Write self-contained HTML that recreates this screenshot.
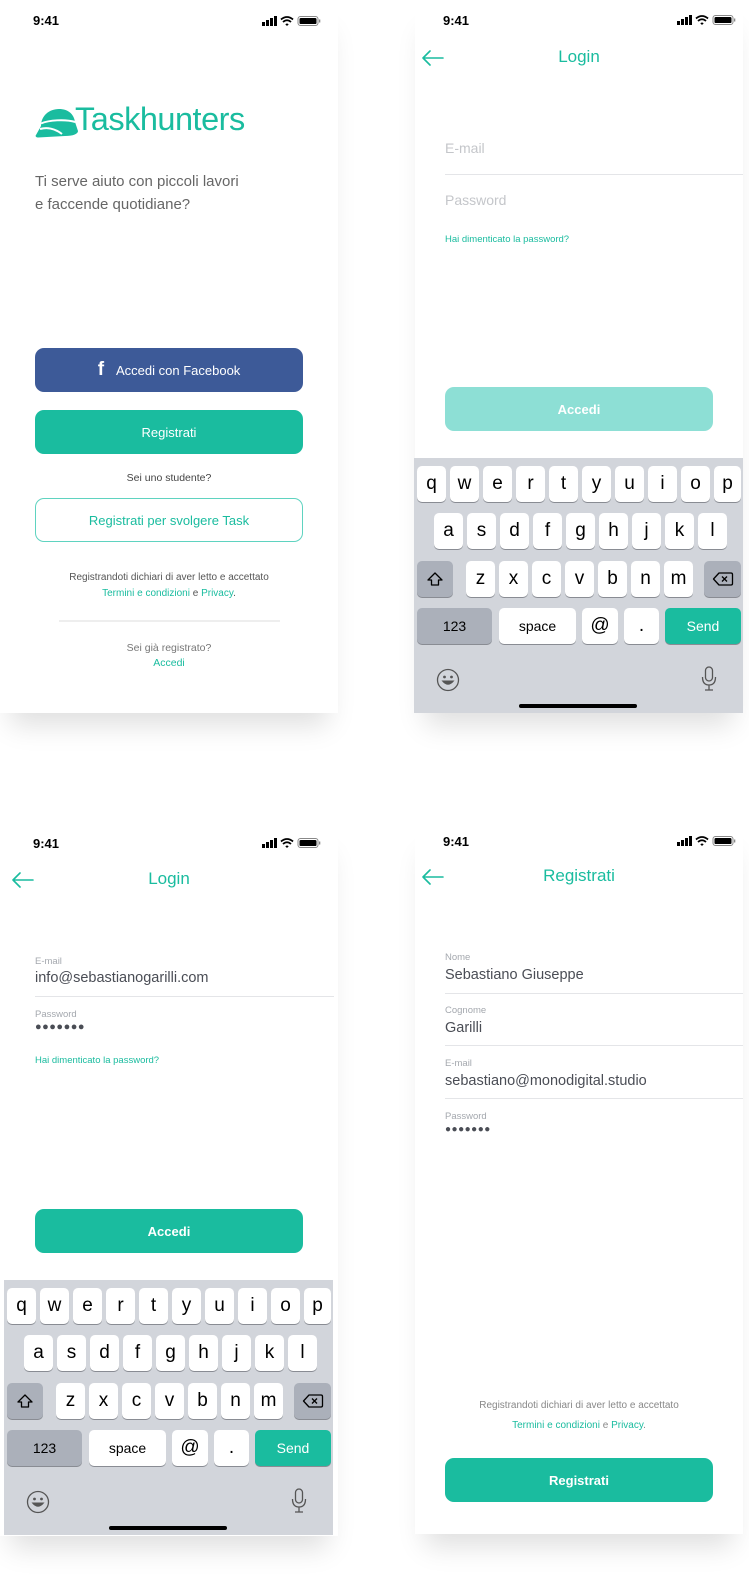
<!DOCTYPE html>
<html><head><meta charset="utf-8">
<style>
*{margin:0;padding:0;box-sizing:border-box}
body{width:749px;height:1591px;background:#fff;position:relative;overflow:hidden;font-family:"Liberation Sans",Arial,sans-serif}
.scr{position:absolute;background:#fff;box-shadow:0 22px 26px -10px rgba(0,0,0,.13)}
.a{position:absolute}
.t{position:absolute;white-space:nowrap}
.time{font-weight:bold;font-size:13px;color:#000}
.btn{position:absolute;border-radius:9px;color:#fff;font-size:13px;display:flex;align-items:center;justify-content:center}
.teal{color:#1abc9f}
.kb{position:absolute;width:329px;height:255px;background:#d2d5db}
.k{position:absolute;background:#fff;border-radius:5px;box-shadow:0 1px 0 #898c93;display:flex;align-items:center;justify-content:center;font-size:19px;color:#000;height:36px}
.g{background:#abb0ba}
.lbl{font-size:9.5px;color:#a4a8ae}
.val{font-size:14.5px;color:#4a4d55}
.ln{position:absolute;height:1px;background:#e4e5e8}
.title{font-size:17px;color:#1abc9f}
</style></head><body>

<svg width="0" height="0" style="position:absolute">
<defs>
<g id="st">
<rect x="0" y="6" width="3" height="4" fill="#000"/><rect x="4" y="4" width="3" height="6" fill="#000"/><rect x="8" y="2" width="3" height="8" fill="#000"/><rect x="12" y="0" width="3" height="10" fill="#000"/>
<path d="M19 3.5 Q25 -1.5 31 3.5" stroke="#000" stroke-width="1.8" fill="none"/>
<path d="M21 6 Q25 2.5 29 6" stroke="#000" stroke-width="1.8" fill="none"/>
<path d="M23.3 8.3 L25 10 L26.7 8.3 Q25 6.8 23.3 8.3Z" fill="#000"/>
<rect x="36" y="0.5" width="20" height="9" rx="2.5" fill="none" stroke="#888" stroke-width="1"/>
<rect x="37.5" y="2" width="17" height="6" rx="1.3" fill="#000"/>
<rect x="57" y="3.5" width="1.3" height="3" fill="#888"/>
</g>
<g id="arr"><path d="M2 8 H22 M9 1 L2 8 L9 15" stroke="#1abc9f" stroke-width="1.6" fill="none" stroke-linecap="round" stroke-linejoin="round"/></g>
</defs></svg>

<!-- SCREEN 1 -->
<div class="scr" style="left:0;top:0;width:338px;height:713px">
  <div class="t time" style="left:33px;top:13px">9:41</div>
  <svg class="a" style="left:262px;top:16px" width="60" height="11"><use href="#st"/></svg>
  <svg class="a" style="left:35px;top:108px" width="44" height="30" viewBox="0 0 44 30">
    <path d="M6 18 C6 8 14 1 24 1 C33 1 39 6 40 14 L43 23 C43 26 38 28 30 28 L3 29.5 C1 29.5 0 28 1 27 Z" fill="#1abc9f"/>
    <path d="M6 15.5 C14 12 30 11 40.5 14" stroke="#fff" stroke-width="2" fill="none"/>
    <path d="M5 21 C12 19 20 20.5 27 26" stroke="#fff" stroke-width="2" fill="none"/>
  </svg>
  <div class="t teal" style="left:75px;top:101px;font-size:32.5px;letter-spacing:-0.5px">Taskhunters</div>
  <div class="t" style="left:35px;top:170px;font-size:15px;color:#666;line-height:23px">Ti serve aiuto con piccoli lavori<br>e faccende quotidiane?</div>
  <div class="btn" style="left:35px;top:348px;width:268px;height:44px;background:#3d5a98">
    <span style="font-weight:bold;font-size:19px;margin-right:12px">f</span>Accedi con Facebook</div>
  <div class="btn" style="left:35px;top:410px;width:268px;height:44px;background:#1abc9f">Registrati</div>
  <div class="t" style="left:0;width:338px;text-align:center;top:472px;font-size:10.5px;color:#444">Sei uno studente?</div>
  <div class="btn teal" style="left:35px;top:498px;width:268px;height:44px;border:1px solid #5fd3c0;color:#1abc9f">Registrati per svolgere Task</div>
  <div class="t" style="left:0;width:338px;text-align:center;top:570px;font-size:10px;color:#555;line-height:16px">Registrandoti dichiari di aver letto e accettato<br><span class="teal">Termini e condizioni</span> e <span class="teal">Privacy</span>.</div>
  <div class="ln" style="left:59px;top:620px;width:221px;height:2px;background:#eee"></div>
  <div class="t" style="left:0;width:338px;text-align:center;top:641px;font-size:10.5px;color:#777;line-height:15px">Sei già registrato?<br><span class="teal">Accedi</span></div>
</div>

<!-- SCREEN 2 -->
<div class="scr" style="left:415px;top:0;width:328px;height:713px">
  <div class="t time" style="left:28px;top:13px">9:41</div>
  <svg class="a" style="left:262px;top:15px" width="60" height="11"><use href="#st"/></svg>
  <svg class="a" style="left:6px;top:50px" width="26" height="17"><use href="#arr"/></svg>
  <div class="t title" style="left:0;width:328px;text-align:center;top:47px">Login</div>
  <div class="t" style="left:30px;top:140px;font-size:14px;color:#c4c6ca">E-mail</div>
  <div class="ln" style="left:30px;top:174px;width:298px"></div>
  <div class="t" style="left:30px;top:192px;font-size:14px;color:#c4c6ca">Password</div>
  <div class="t teal" style="left:30px;top:234px;font-size:9.5px">Hai dimenticato la password?</div>
  <div class="btn" style="left:30px;top:387px;width:268px;height:44px;background:#8ddfd5;font-weight:bold">Accedi</div>
  <div class="kb" style="left:-1px;top:458px">
    <div class="k" style="left:3px;top:8px;width:29px">q</div><div class="k" style="left:36px;top:8px;width:29px">w</div><div class="k" style="left:69px;top:8px;width:29px">e</div><div class="k" style="left:102px;top:8px;width:29px">r</div><div class="k" style="left:135px;top:8px;width:29px">t</div><div class="k" style="left:168px;top:8px;width:29px">y</div><div class="k" style="left:201px;top:8px;width:29px">u</div><div class="k" style="left:234px;top:8px;width:29px">i</div><div class="k" style="left:267px;top:8px;width:29px">o</div><div class="k" style="left:300px;top:8px;width:27px">p</div>
    <div class="k" style="left:20px;top:55px;width:29px">a</div><div class="k" style="left:53px;top:55px;width:29px">s</div><div class="k" style="left:86px;top:55px;width:29px">d</div><div class="k" style="left:119px;top:55px;width:29px">f</div><div class="k" style="left:152px;top:55px;width:29px">g</div><div class="k" style="left:185px;top:55px;width:29px">h</div><div class="k" style="left:218px;top:55px;width:29px">j</div><div class="k" style="left:251px;top:55px;width:29px">k</div><div class="k" style="left:284px;top:55px;width:29px">l</div>
    <div class="k g" style="left:3px;top:103px;width:36px"><svg width="18" height="16"><path d="M9 2 L2 9 H5.5 V14 H12.5 V9 H16 Z" fill="none" stroke="#000" stroke-width="1.3" stroke-linejoin="round"/></svg></div>
    <div class="k" style="left:52px;top:103px;width:29px">z</div><div class="k" style="left:85px;top:103px;width:29px">x</div><div class="k" style="left:118px;top:103px;width:29px">c</div><div class="k" style="left:151px;top:103px;width:29px">v</div><div class="k" style="left:184px;top:103px;width:29px">b</div><div class="k" style="left:217px;top:103px;width:29px">n</div><div class="k" style="left:250px;top:103px;width:29px">m</div>
    <div class="k g" style="left:290px;top:103px;width:37px"><svg width="22" height="16"><path d="M7 2 H19 Q20.5 2 20.5 3.5 V12.5 Q20.5 14 19 14 H7 L1.5 8 Z" fill="none" stroke="#000" stroke-width="1.3" stroke-linejoin="round"/><path d="M10 5.5 L15 10.5 M15 5.5 L10 10.5" stroke="#000" stroke-width="1.3"/></svg></div>
    <div class="k g" style="left:3px;top:150px;width:75px;font-size:14px">123</div>
    <div class="k" style="left:85px;top:150px;width:77px;font-size:14px">space</div>
    <div class="k" style="left:168px;top:150px;width:36px">@</div>
    <div class="k" style="left:210px;top:150px;width:35px">.</div>
    <div class="k" style="left:251px;top:150px;width:76px;font-size:14px;background:#1abc9f;color:#fff">Send</div>
    <svg class="a" style="left:22px;top:210px" width="24" height="24"><circle cx="12" cy="12" r="10.5" fill="none" stroke="#555" stroke-width="1.3"/><circle cx="8.5" cy="9" r="1.4" fill="#555"/><circle cx="15.5" cy="9" r="1.4" fill="#555"/><path d="M5.5 12.5 Q12 21 18.5 12.5 Z" fill="#555"/></svg>
    <svg class="a" style="left:286px;top:208px" width="18" height="26"><rect x="5.5" y="1" width="7" height="14" rx="3.5" fill="none" stroke="#555" stroke-width="1.3"/><path d="M2.5 11 Q2.5 19 9 19 Q15.5 19 15.5 11 M9 19 V24 M5 24 H13" fill="none" stroke="#555" stroke-width="1.3"/></svg>
    <div class="a" style="left:105px;top:246px;width:118px;height:4px;border-radius:2px;background:#000"></div>
  </div>
</div>

<!-- SCREEN 3 -->
<div class="scr" style="left:0;top:823px;width:338px;height:713px">
  <div class="t time" style="left:33px;top:13px">9:41</div>
  <svg class="a" style="left:262px;top:15px" width="60" height="11"><use href="#st"/></svg>
  <svg class="a" style="left:11px;top:49px" width="26" height="17"><use href="#arr"/></svg>
  <div class="t title" style="left:0;width:338px;text-align:center;top:46px">Login</div>
  <div class="t lbl" style="left:35px;top:133px">E-mail</div>
  <div class="t val" style="left:35px;top:147px">info@sebastianogarilli.com</div>
  <div class="ln" style="left:35px;top:173px;width:299px"></div>
  <div class="t lbl" style="left:35px;top:186px">Password</div>
  <div class="t" style="left:35px;top:198px;font-size:11px;color:#4a4d55;letter-spacing:0.5px">●●●●●●●</div>
  <div class="t teal" style="left:35px;top:232px;font-size:9.5px">Hai dimenticato la password?</div>
  <div class="btn" style="left:35px;top:386px;width:268px;height:44px;background:#1abc9f;font-weight:bold">Accedi</div>
  <div class="kb" style="left:4px;top:457px">
    <div class="k" style="left:3px;top:8px;width:29px">q</div><div class="k" style="left:36px;top:8px;width:29px">w</div><div class="k" style="left:69px;top:8px;width:29px">e</div><div class="k" style="left:102px;top:8px;width:29px">r</div><div class="k" style="left:135px;top:8px;width:29px">t</div><div class="k" style="left:168px;top:8px;width:29px">y</div><div class="k" style="left:201px;top:8px;width:29px">u</div><div class="k" style="left:234px;top:8px;width:29px">i</div><div class="k" style="left:267px;top:8px;width:29px">o</div><div class="k" style="left:300px;top:8px;width:27px">p</div>
    <div class="k" style="left:20px;top:55px;width:29px">a</div><div class="k" style="left:53px;top:55px;width:29px">s</div><div class="k" style="left:86px;top:55px;width:29px">d</div><div class="k" style="left:119px;top:55px;width:29px">f</div><div class="k" style="left:152px;top:55px;width:29px">g</div><div class="k" style="left:185px;top:55px;width:29px">h</div><div class="k" style="left:218px;top:55px;width:29px">j</div><div class="k" style="left:251px;top:55px;width:29px">k</div><div class="k" style="left:284px;top:55px;width:29px">l</div>
    <div class="k g" style="left:3px;top:103px;width:36px"><svg width="18" height="16"><path d="M9 2 L2 9 H5.5 V14 H12.5 V9 H16 Z" fill="none" stroke="#000" stroke-width="1.3" stroke-linejoin="round"/></svg></div>
    <div class="k" style="left:52px;top:103px;width:29px">z</div><div class="k" style="left:85px;top:103px;width:29px">x</div><div class="k" style="left:118px;top:103px;width:29px">c</div><div class="k" style="left:151px;top:103px;width:29px">v</div><div class="k" style="left:184px;top:103px;width:29px">b</div><div class="k" style="left:217px;top:103px;width:29px">n</div><div class="k" style="left:250px;top:103px;width:29px">m</div>
    <div class="k g" style="left:290px;top:103px;width:37px"><svg width="22" height="16"><path d="M7 2 H19 Q20.5 2 20.5 3.5 V12.5 Q20.5 14 19 14 H7 L1.5 8 Z" fill="none" stroke="#000" stroke-width="1.3" stroke-linejoin="round"/><path d="M10 5.5 L15 10.5 M15 5.5 L10 10.5" stroke="#000" stroke-width="1.3"/></svg></div>
    <div class="k g" style="left:3px;top:150px;width:75px;font-size:14px">123</div>
    <div class="k" style="left:85px;top:150px;width:77px;font-size:14px">space</div>
    <div class="k" style="left:168px;top:150px;width:36px">@</div>
    <div class="k" style="left:210px;top:150px;width:35px">.</div>
    <div class="k" style="left:251px;top:150px;width:76px;font-size:14px;background:#1abc9f;color:#fff">Send</div>
    <svg class="a" style="left:22px;top:210px" width="24" height="24"><circle cx="12" cy="12" r="10.5" fill="none" stroke="#555" stroke-width="1.3"/><circle cx="8.5" cy="9" r="1.4" fill="#555"/><circle cx="15.5" cy="9" r="1.4" fill="#555"/><path d="M5.5 12.5 Q12 21 18.5 12.5 Z" fill="#555"/></svg>
    <svg class="a" style="left:286px;top:208px" width="18" height="26"><rect x="5.5" y="1" width="7" height="14" rx="3.5" fill="none" stroke="#555" stroke-width="1.3"/><path d="M2.5 11 Q2.5 19 9 19 Q15.5 19 15.5 11 M9 19 V24 M5 24 H13" fill="none" stroke="#555" stroke-width="1.3"/></svg>
    <div class="a" style="left:105px;top:246px;width:118px;height:4px;border-radius:2px;background:#000"></div>
  </div>
</div>

<!-- SCREEN 4 -->
<div class="scr" style="left:415px;top:823px;width:328px;height:711px">
  <div class="t time" style="left:28px;top:11px">9:41</div>
  <svg class="a" style="left:262px;top:13px" width="60" height="11"><use href="#st"/></svg>
  <svg class="a" style="left:6px;top:46px" width="26" height="17"><use href="#arr"/></svg>
  <div class="t title" style="left:0;width:328px;text-align:center;top:43px">Registrati</div>
  <div class="t lbl" style="left:30px;top:129px">Nome</div>
  <div class="t val" style="left:30px;top:144px">Sebastiano Giuseppe</div>
  <div class="ln" style="left:30px;top:170px;width:298px"></div>
  <div class="t lbl" style="left:30px;top:182px">Cognome</div>
  <div class="t val" style="left:30px;top:197px">Garilli</div>
  <div class="ln" style="left:30px;top:222px;width:298px"></div>
  <div class="t lbl" style="left:30px;top:235px">E-mail</div>
  <div class="t val" style="left:30px;top:250px">sebastiano@monodigital.studio</div>
  <div class="ln" style="left:30px;top:275px;width:298px"></div>
  <div class="t lbl" style="left:30px;top:288px">Password</div>
  <div class="t" style="left:30px;top:301px;font-size:10px;color:#4a4d55;letter-spacing:0.5px">●●●●●●●</div>
  <div class="t" style="left:0;width:328px;text-align:center;top:573px;font-size:10px;color:#888;line-height:20px">Registrandoti dichiari di aver letto e accettato<br><span class="teal">Termini e condizioni</span> e <span class="teal">Privacy</span>.</div>
  <div class="btn" style="left:30px;top:635px;width:268px;height:44px;background:#1abc9f;font-weight:bold">Registrati</div>
</div>

</body></html>
